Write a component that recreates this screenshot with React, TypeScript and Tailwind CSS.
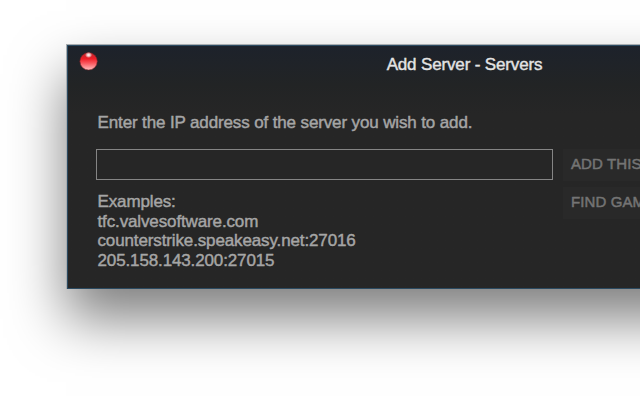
const EXAMPLES = ['tfc.valvesoftware.com', 'counterstrike.speakeasy.net:27016', '205.158.143.200:27015'];

function CloseButton() {
  return (
    <button aria-label="Close" className="h-[19px] w-[19px]">
      <svg viewBox="0 0 19 19" className="block h-full w-full">
        <defs>
          <linearGradient id="gem" x1="0" y1="0" x2="0" y2="1">
            <stop offset="0" stopColor="#b8292e" />
            <stop offset="0.35" stopColor="#ee1e27" />
            <stop offset="0.6" stopColor="#f9555c" />
            <stop offset="1" stopColor="#ffc0c0" />
          </linearGradient>
          <radialGradient id="shine">
            <stop offset="0" stopColor="#fff" />
            <stop offset="0.4" stopColor="#fff" stopOpacity="0.75" />
            <stop offset="1" stopColor="#fff" stopOpacity="0" />
          </radialGradient>
        </defs>
        <circle cx="9.6" cy="9.3" r="8.7" fill="url(#gem)" stroke="#7c2227" strokeWidth="0.6" />
        <ellipse cx="9.6" cy="3" rx="3.6" ry="3" fill="url(#shine)" />
      </svg>
    </button>
  );
}

export default function App() {
  return (
    <div className="h-[400px] w-[640px] overflow-hidden bg-white pt-[44px] pl-[66px] font-['Liberation_Sans',Arial,sans-serif] text-[17px]">
      <section className="w-[796px] border-t border-l border-[#a9adb0] shadow-[0_30px_52px_rgba(0,0,0,0.5)]">
        <div className="flex h-[244px] flex-col border border-[#2b4a61] bg-[#262626] bg-linear-to-b from-[#1d222b] via-[#222425] via-16% to-[#262626] to-28%">
          <header className="grid h-[64px] grid-cols-[1fr_auto_1fr] items-start">
            <div className="pt-[6px] pl-[10.5px]">
              <CloseButton />
            </div>
            <h1 className="pt-[9px] leading-[20px] tracking-[-0.15px] text-[#e4e4e4] [-webkit-text-stroke:0.4px_#e4e4e4]">Add Server - Servers</h1>
          </header>
          <div className="flex flex-col pl-[29px] text-[#a5a5a5] [-webkit-text-stroke:0.45px_#a5a5a5]">
            <label htmlFor="ip" className="h-[39px] pt-[3px] pl-[0.5px] leading-[20px] tracking-[-0.13px] whitespace-nowrap">Enter the IP address of the server you wish to add.</label>
            <div className="-ml-px flex h-[38px]">
              <input id="ip" className="h-[31px] w-[457px] border border-[#858585] bg-[#262626] px-2 outline-none" />
              <div className="ml-[10px] flex flex-1 flex-col gap-[6px] text-[15px] leading-[30px] tracking-[0.1px] text-[#747474] [-webkit-text-stroke:0.5px_#747474]">
                <button className="h-[32px] w-[190px] shrink-0 bg-[#292929] pb-[2px] pl-[8px] text-left whitespace-nowrap">ADD THIS ADDRESS</button>
                <button className="h-[32px] w-[190px] shrink-0 bg-[#292929] pb-[2px] pl-[8px] text-left whitespace-nowrap">FIND GAMES</button>
              </div>
            </div>
            <div className="pt-[5px] pl-[0.5px] leading-[19.5px] tracking-[-0.13px]">
              <p>Examples:</p>
              {EXAMPLES.map((address) => (
                <p key={address}>{address}</p>
              ))}
            </div>
          </div>
        </div>
      </section>
    </div>
  );
}
